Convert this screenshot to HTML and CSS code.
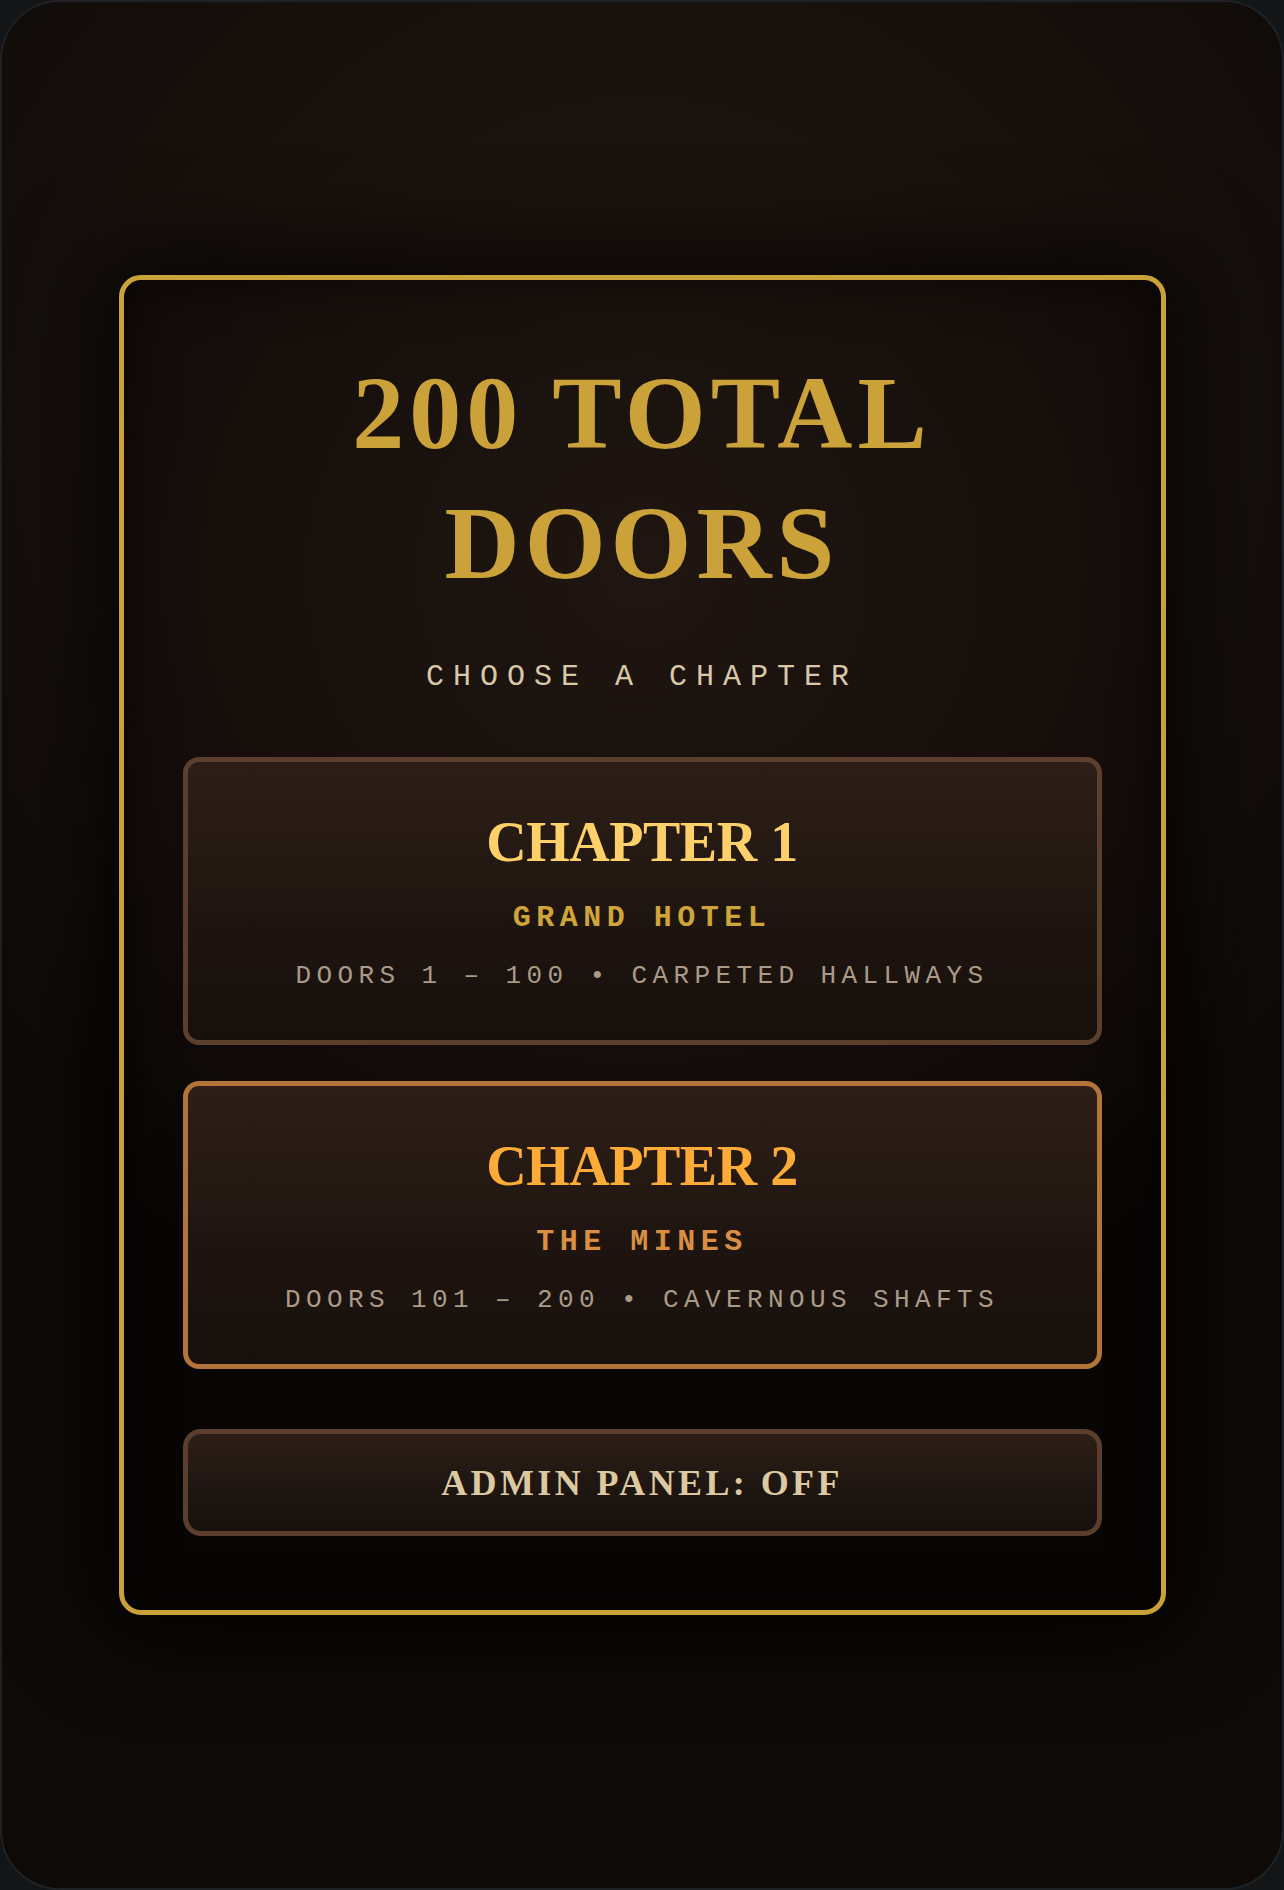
FILE: index.html
```html
<!DOCTYPE html>
<html lang="en">
<head>
<meta charset="utf-8">
<title>200 Total Doors</title>
<link rel="stylesheet" href="styles.css">
</head>
<body>
<div class="frame">
  <main class="menu">
    <h1 class="title">200 TOTAL<br>DOORS</h1>
    <p class="choose">CHOOSE A CHAPTER</p>
    <div class="chapter chapter-one">
      <h2 class="chapter-title">CHAPTER 1</h2>
      <div class="chapter-name">GRAND HOTEL</div>
      <div class="chapter-desc">DOORS 1 – 100 • CARPETED HALLWAYS</div>
    </div>
    <div class="chapter chapter-two">
      <h2 class="chapter-title">CHAPTER 2</h2>
      <div class="chapter-name">THE MINES</div>
      <div class="chapter-desc">DOORS 101 – 200 • CAVERNOUS SHAFTS</div>
    </div>
    <button class="admin">ADMIN PANEL: OFF</button>
  </main>
</div>
</body>
</html>
```

FILE: styles.css
```css
html, body {
  margin: 0;
  padding: 0;
  background: #141517;
}

.frame {
  box-sizing: border-box;
  width: 1284px;
  height: 1890px;
  border: 2px solid #202124;
  border-radius: 60px;
  background: radial-gradient(ellipse 70% 45% at 50% 22%, #1e1510 0%, #17110d 55%, #0d0a08 100%);
  display: flex;
  align-items: center;
  justify-content: center;
  overflow: hidden;
}

.menu {
  box-sizing: border-box;
  width: 1047px;
  height: 1340px;
  border: 5px solid #cba23a;
  border-radius: 22px;
  padding: 68px 59px 0;
  background: radial-gradient(ellipse 80% 60% at 50% 22%, #1f1611 0%, #170f0c 50%, #080605 100%);
  box-shadow: 0 0 90px 20px rgba(0, 0, 0, 0.75), inset 0 0 50px rgba(0, 0, 0, 0.55);
  display: flex;
  flex-direction: column;
  align-items: stretch;
  text-align: center;
}

.title {
  margin: 0;
  font-family: "Liberation Serif", "Times New Roman", serif;
  font-weight: 700;
  font-size: 104px;
  line-height: 130px;
  letter-spacing: 5px;
  color: #cba23a;
}

.choose {
  margin: 52px 0 0;
  font-family: "Courier New", "Liberation Mono", monospace;
  font-size: 30px;
  line-height: 34px;
  letter-spacing: 9px;
  color: #d8c8a8;
}

.chapter {
  box-sizing: border-box;
  height: 288px;
  margin-top: 63px;
  border: 5px solid #5b3e2b;
  border-radius: 16px;
  padding: 46px 10px 0;
  background: linear-gradient(180deg, #2d1f17 0%, #1f1510 55%, #17100c 100%);
}

.chapter-two {
  margin-top: 36px;
  border-color: #b3743a;
}

.chapter-title {
  margin: 0;
  font-family: "Liberation Serif", "Times New Roman", serif;
  font-weight: 700;
  font-size: 56px;
  line-height: 68px;
  letter-spacing: -0.5px;
  color: #fdd06a;
}

.chapter-two .chapter-title {
  color: #ffab38;
}

.chapter-name {
  margin-top: 25px;
  font-family: "Courier New", "Liberation Mono", monospace;
  font-weight: 700;
  font-size: 30px;
  line-height: 34px;
  letter-spacing: 5.5px;
  color: #cfa43a;
}

.chapter-two .chapter-name {
  color: #d98e44;
}

.chapter-desc {
  margin-top: 26px;
  font-family: "Courier New", "Liberation Mono", monospace;
  font-size: 26px;
  line-height: 30px;
  letter-spacing: 5.4px;
  color: #aa9b88;
}

.admin {
  box-sizing: border-box;
  height: 107px;
  margin-top: 60px;
  border: 5px solid #5b3e2b;
  border-radius: 18px;
  padding: 0;
  background: linear-gradient(180deg, #2c1f17 0%, #1f1611 55%, #17110d 100%);
  font-family: "Liberation Serif", "Times New Roman", serif;
  font-weight: 700;
  font-size: 36px;
  line-height: 36px;
  letter-spacing: 3.4px;
  color: #dcc9a2;
}
```
